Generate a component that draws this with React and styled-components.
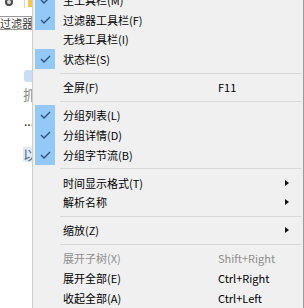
import React from "react";
import styled, { createGlobalStyle } from "styled-components";

const GlobalStyle = createGlobalStyle`
  html, body {
    margin: 0;
    padding: 0;
    background: #ffffff;
  }
  body {
    font-family: "Noto Sans CJK SC", "Noto Sans", sans-serif;
  }
`;

const Page = styled.div`
  display: flex;
  width: 304px;
  height: 308px;
  overflow: hidden;
  background: #ffffff;
`;

const Backdrop = styled.div`
  width: 32px;
  flex: none;
  overflow: hidden;
  display: flex;
  flex-direction: column;
  background: #ffffff;
`;

const ToolRow = styled.div`
  display: flex;
  align-items: flex-start;
  height: 16px;
`;

const GearIcon = styled.div`
  width: 8px;
  height: 8px;
  margin: -2px 0 0 5px;
  border-radius: 50%;
  border: 2px solid #4a4a4a;
  background: #d8d8d8;
  box-sizing: border-box;
`;

const ToolDivider = styled.div`
  width: 1px;
  height: 8px;
  margin-left: 11px;
  background: #d4d4d4;
`;

const FolderIcon = styled.div`
  width: 5px;
  height: 7px;
  margin-left: 3px;
  background: #f2c94c;
`;

const FilterBox = styled.div`
  height: 12px;
  width: 31px;
  border: 1px solid #9a9a9a;
  border-left: none;
  font-size: 11px;
  line-height: 12px;
  color: #3a3a3a;
  white-space: nowrap;
  overflow: hidden;
`;

const SideTab = styled.div`
  margin: 40px 0 0 24px;
  width: 12px;
  height: 12px;
  border-radius: 3px;
  background: #c9def5;
`;

const SideGlyph = styled.div`
  margin: ${(p) => p.gap || "5px"} 0 0 23px;
  font-size: 14px;
  line-height: 15px;
  color: ${(p) => p.color || "#8a8a8a"};
  background: ${(p) => p.bg || "transparent"};
  white-space: nowrap;
  width: 20px;
`;

const Dots = styled.div`
  margin: 13px 0 0 24px;
  font-size: 12px;
  line-height: 12px;
  color: #222;
`;

const Menu = styled.div`
  width: 268px;
  flex: none;
  display: flex;
  flex-direction: column;
  background: #f0f0f0;
  border-left: 1px solid #cfcfcf;
  border-right: 1px solid #9c9c9c;
  padding-left: 2px;
  margin-top: -9.9px;
  font-size: 11px;
`;

const Item = styled.div`
  display: flex;
  align-items: center;
  height: 19.75px;
  color: ${(p) => (p.disabled ? "#8e8e8e" : "#000000")};
`;

const CheckCell = styled.div`
  width: 20px;
  height: 100%;
  flex: none;
  display: flex;
  align-items: center;
  justify-content: center;
  background: ${(p) => (p.checked ? "#92c9f6" : "transparent")};
`;

const Label = styled.span`
  width: 155px;
  margin-left: 8px;
  flex: none;
  white-space: nowrap;
  line-height: 14px;
`;

const Shortcut = styled.span`
  width: 67px;
  flex: none;
  white-space: nowrap;
  line-height: 14px;
`;

const Arrow = styled.span`
  width: 0;
  height: 0;
  border-left: 4px solid #111;
  border-top: 3.5px solid transparent;
  border-bottom: 3.5px solid transparent;
`;

const Separator = styled.div`
  height: 8.25px;
  display: flex;
  align-items: center;
  padding-left: 25px;
  padding-right: 2px;
  &::after {
    content: "";
    flex: 1;
    height: 1px;
    background: #d8d8d8;
  }
`;

const EdgeStrip = styled.div`
  flex: 1;
  background: linear-gradient(
    #c4c4c4 0 10px,
    #8e8e8e 10px 14px,
    #c4c4c4 14px 28px,
    #8e8e8e 28px 32px,
    #d6d6d6 32px
  );
`;

function Check() {
  return (
    <svg width="11" height="8" viewBox="0 0 11 8">
      <polyline
        points="1,4 4,7 10,1"
        fill="none"
        stroke="#2b527f"
        strokeWidth="1.4"
      />
    </svg>
  );
}

const rows = [
  { label: "主工具栏(M)", checked: true },
  { label: "过滤器工具栏(F)", checked: true },
  { label: "无线工具栏(I)" },
  { label: "状态栏(S)", checked: true },
  "sep",
  { label: "全屏(F)", shortcut: "F11" },
  "sep",
  { label: "分组列表(L)", checked: true },
  { label: "分组详情(D)", checked: true },
  { label: "分组字节流(B)", checked: true },
  "sep",
  { label: "时间显示格式(T)", sub: true },
  { label: "解析名称", sub: true },
  "sep",
  { label: "缩放(Z)", sub: true },
  "sep",
  { label: "展开子树(X)", shortcut: "Shift+Right", disabled: true },
  { label: "展开全部(E)", shortcut: "Ctrl+Right" },
  { label: "收起全部(A)", shortcut: "Ctrl+Left" },
];

export default function App() {
  return (
    <Page>
      <GlobalStyle />
      <Backdrop>
        <ToolRow>
          <GearIcon />
          <ToolDivider />
          <FolderIcon />
        </ToolRow>
        <FilterBox>过滤器</FilterBox>
        <SideTab />
        <SideGlyph>抓</SideGlyph>
        <Dots>...</Dots>
        <SideGlyph gap="20px" color="#5a6e8a" bg="#e1ebf7">
          以
        </SideGlyph>
      </Backdrop>
      <Menu>
        {rows.map((row, i) => {
          if (row === "sep") return <Separator key={`sep${i}`} />;
          return (
            <Item key={row.label} disabled={row.disabled}>
              <CheckCell checked={row.checked}>
                {row.checked && <Check />}
              </CheckCell>
              <Label>{row.label}</Label>
              <Shortcut>{row.shortcut}</Shortcut>
              {row.sub && <Arrow />}
            </Item>
          );
        })}
      </Menu>
      <EdgeStrip />
    </Page>
  );
}
